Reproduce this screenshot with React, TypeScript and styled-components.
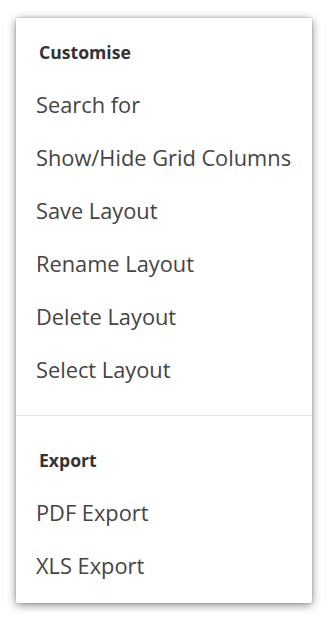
import React from "react";
import styled, { createGlobalStyle } from "styled-components";

const Global = createGlobalStyle`
  html, body { margin: 0; padding: 0; background: #ffffff; }
  body { font-family: "Open Sans", "Liberation Sans", sans-serif; }
`;

const Page = styled.div`
  padding: 18px 17px 19px 16px;
`;

const Menu = styled.div`
  width: 296px;
  height: 585px;
  box-sizing: border-box;
  background: #ffffff;
  border-radius: 2px;
  box-shadow: 0 2px 10px rgba(0, 0, 0, 0.45), 0 0 3px rgba(0, 0, 0, 0.2);
  display: flex;
  flex-direction: column;
`;

const Section = styled.div<{ $top: number; $bottom: number }>`
  display: flex;
  flex-direction: column;
  padding-top: ${(p) => p.$top}px;
  padding-bottom: ${(p) => p.$bottom}px;
`;

const Header = styled.div`
  height: 53px;
  display: flex;
  align-items: center;
  padding-left: 23px;
  font-size: 17.6px;
  font-weight: 700;
  color: #333333;
`;

const Item = styled.div`
  height: 53px;
  display: flex;
  align-items: center;
  padding-left: 20px;
  font-size: 21.8px;
  color: #444444;
  cursor: pointer;
  white-space: nowrap;
`;

const Divider = styled.div`
  height: 1px;
  background: #e6e6e6;
`;

const customise = [
  "Search for",
  "Show/Hide Grid Columns",
  "Save Layout",
  "Rename Layout",
  "Delete Layout",
  "Select Layout",
];

const exportItems = ["PDF Export", "XLS Export"];

export default function App() {
  return (
    <>
      <Global />
      <Page>
        <Menu>
          <Section $top={7} $bottom={19}>
            <Header>Customise</Header>
            {customise.map((t) => (
              <Item key={t}>{t}</Item>
            ))}
          </Section>
          <Divider />
          <Section $top={17} $bottom={0}>
            <Header>Export</Header>
            {exportItems.map((t) => (
              <Item key={t}>{t}</Item>
            ))}
          </Section>
        </Menu>
      </Page>
    </>
  );
}
